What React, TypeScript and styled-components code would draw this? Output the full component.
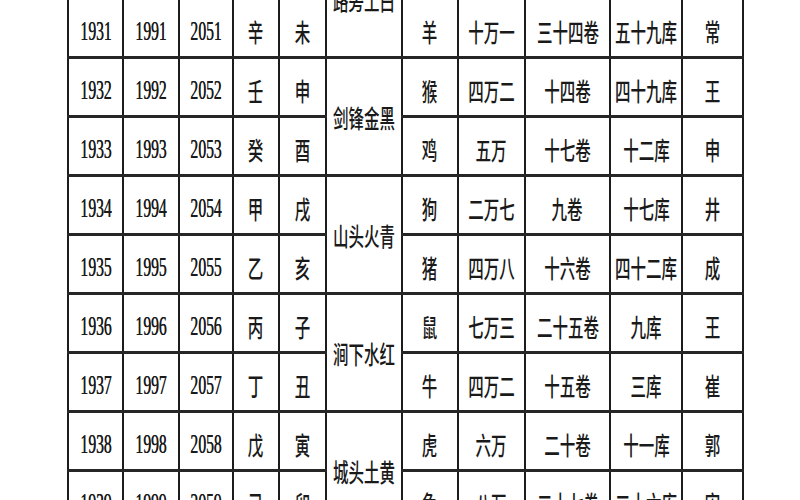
import React from "react"
import styled, { createGlobalStyle } from "styled-components"

const GlobalStyle = createGlobalStyle`
  html, body {
    margin: 0;
    padding: 0;
    background: #ffffff;
    overflow: hidden;
  }
`

const Page = styled.div`
  width: 800px;
  height: 500px;
  overflow: hidden;
  background: #ffffff;
  padding-left: 67px;
  box-sizing: border-box;
`

const Table = styled.table`
  border-collapse: collapse;
  table-layout: fixed;
  width: 675px;
  margin-top: -62px;
  font-family: "Noto Sans CJK SC", "Liberation Serif", sans-serif;
  color: #1a1a1a;
`

const Row = styled.tr`
  height: 59px;
`

const Cell = styled.td`
  border-left: 2px solid #1c1c1c;
  border-right: 2px solid #1c1c1c;
  border-top: 3px solid #262626;
  border-bottom: 3px solid #262626;
  padding: 0;
  vertical-align: middle;
`

const Inner = styled.div<{ $shift?: number }>`
  display: flex;
  justify-content: center;
  align-items: center;
  padding-top: ${p => p.$shift ?? 6}px;
  white-space: nowrap;
`

const Text = styled.span<{ $num?: boolean }>`
  display: inline-block;
  font-family: ${p => (p.$num ? `"Liberation Serif", serif` : `"Noto Sans CJK SC", sans-serif`)};
  font-size: ${p => (p.$num ? 27 : 25)}px;
  font-weight: ${p => (p.$num ? 400 : 500)};
  line-height: 1;
  text-shadow: ${p => (p.$num ? "0.4px 0 0 #1a1a1a" : "none")};
  transform: scaleX(${p => (p.$num ? 0.58 : 0.62)});
`

const widths = [55, 56, 54, 46, 47, 76, 56, 67, 85, 72, 61]

type Year = {
  a: string
  b: string
  c: string
  gan: string
  zhi: string
  nayin?: string
  animal: string
  wan: string
  juan: string
  ku: string
  name: string
}

const years: Year[] = [
  { a: "1930", b: "1990", c: "2050", gan: "庚", zhi: "午", nayin: "路旁土白", animal: "马", wan: "九万", juan: "九卷", ku: "二十三库", name: "李" },
  { a: "1931", b: "1991", c: "2051", gan: "辛", zhi: "未", animal: "羊", wan: "十万一", juan: "三十四卷", ku: "五十九库", name: "常" },
  { a: "1932", b: "1992", c: "2052", gan: "壬", zhi: "申", nayin: "剑锋金黑", animal: "猴", wan: "四万二", juan: "十四卷", ku: "四十九库", name: "王" },
  { a: "1933", b: "1993", c: "2053", gan: "癸", zhi: "酉", animal: "鸡", wan: "五万", juan: "十七卷", ku: "十二库", name: "申" },
  { a: "1934", b: "1994", c: "2054", gan: "甲", zhi: "戌", nayin: "山头火青", animal: "狗", wan: "二万七", juan: "九卷", ku: "十七库", name: "井" },
  { a: "1935", b: "1995", c: "2055", gan: "乙", zhi: "亥", animal: "猪", wan: "四万八", juan: "十六卷", ku: "四十二库", name: "成" },
  { a: "1936", b: "1996", c: "2056", gan: "丙", zhi: "子", nayin: "涧下水红", animal: "鼠", wan: "七万三", juan: "二十五卷", ku: "九库", name: "王" },
  { a: "1937", b: "1997", c: "2057", gan: "丁", zhi: "丑", animal: "牛", wan: "四万二", juan: "十五卷", ku: "三库", name: "崔" },
  { a: "1938", b: "1998", c: "2058", gan: "戊", zhi: "寅", nayin: "城头土黄", animal: "虎", wan: "六万", juan: "二十卷", ku: "十一库", name: "郭" },
  { a: "1939", b: "1999", c: "2059", gan: "己", zhi: "卯", animal: "兔", wan: "八万", juan: "二十七卷", ku: "二十六库", name: "宋" },
]

const Num = ({ v }: { v: string }) => (
  <Cell>
    <Inner>
      <Text $num>{v}</Text>
    </Inner>
  </Cell>
)

const Han = ({ v }: { v: string }) => (
  <Cell>
    <Inner>
      <Text>{v}</Text>
    </Inner>
  </Cell>
)

export default function App() {
  return (
    <Page>
      <GlobalStyle />
      <Table>
        <colgroup>
          {widths.map((w, i) => (
            <col key={i} style={{ width: w }} />
          ))}
        </colgroup>
        <tbody>
          {years.map(y => (
            <Row key={y.a}>
              <Num v={y.a} />
              <Num v={y.b} />
              <Num v={y.c} />
              <Han v={y.gan} />
              <Han v={y.zhi} />
              {y.nayin && (
                <Cell rowSpan={2}>
                  <Inner $shift={2}>
                    <Text>{y.nayin}</Text>
                  </Inner>
                </Cell>
              )}
              <Han v={y.animal} />
              <Han v={y.wan} />
              <Han v={y.juan} />
              <Han v={y.ku} />
              <Han v={y.name} />
            </Row>
          ))}
        </tbody>
      </Table>
    </Page>
  )
}
